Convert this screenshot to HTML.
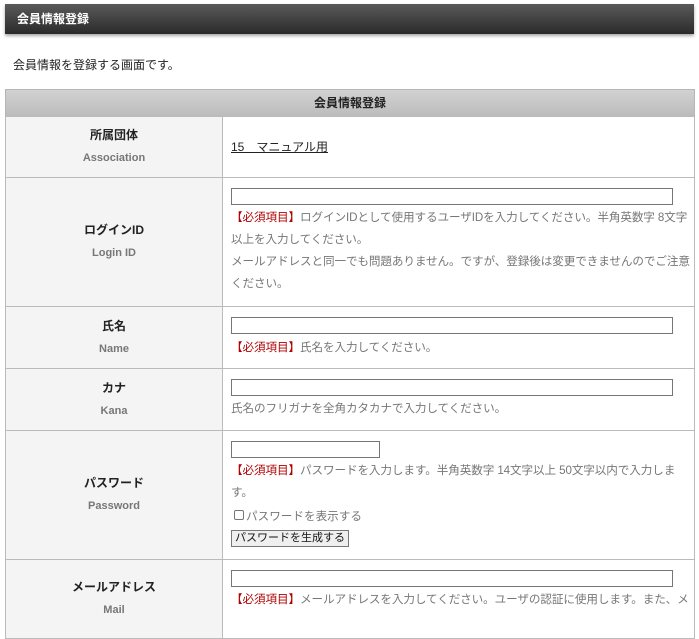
<!DOCTYPE html>
<html><head><meta charset="utf-8"><style>
*{margin:0;padding:0;box-sizing:border-box}
body{width:699px;height:601px;overflow:hidden;background:#fff;font-family:"Liberation Sans","Noto Sans CJK JP",sans-serif;font-size:12px;color:#222;position:relative}
.a{position:absolute;white-space:nowrap}
.hd{position:absolute;left:5px;top:4px;width:689px;height:30px;background:linear-gradient(#5a5a5a,#2a2a2a);box-shadow:0 2px 3px rgba(0,0,0,.35);color:#fff;font-weight:bold;font-size:12px;line-height:30px;padding-left:12px}
.th{position:absolute;left:5px;top:89px;width:690px;height:28px;background:linear-gradient(#d2d2d2,#bcbcbc);border:1px solid #b5b5b5;text-align:center;font-weight:bold;line-height:26px}
.lc{position:absolute;left:5px;width:218px;background:#f4f4f4;border:1px solid #bbb;text-align:center;display:flex;flex-direction:column;justify-content:center}
.rc{position:absolute;left:222px;width:473px;border:1px solid #bbb}
.lc b{display:block;font-size:12px;line-height:23px}
.lc i{display:block;font-style:normal;font-weight:bold;color:#777;font-size:11px;line-height:23px}
.in{position:absolute;left:231px;height:17px;border:1px solid #767676;background:#fff}
.t{position:absolute;left:231px;color:#777;line-height:22px;white-space:nowrap;font-size:11.6px;letter-spacing:-0.1px}
.r{color:#b00000}
</style></head><body>
<div class="hd">会員情報登録</div>
<div class="a" style="left:13px;top:56px">会員情報を登録する画面です。</div>
<div class="th">会員情報登録</div>

<div class="lc" style="top:116px;height:62px"><b>所属団体</b><i>Association</i></div>
<div class="rc" style="top:116px;height:62px"></div>
<div class="a" style="left:231px;top:138px;text-decoration:underline">15　マニュアル用</div>

<div class="lc" style="top:177px;height:130px"><b>ログインID</b><i>Login ID</i></div>
<div class="rc" style="top:177px;height:130px"></div>
<div class="in" style="top:188px;width:442px"></div>
<div class="t" style="top:207px"><span class="r">【必須項目】</span>ログインIDとして使用するユーザIDを入力してください。半角英数字 8文字<br>以上を入力してください。<br>メールアドレスと同一でも問題ありません。ですが、登録後は変更できませんのでご注意<br>ください。</div>

<div class="lc" style="top:306px;height:63px"><b>氏名</b><i>Name</i></div>
<div class="rc" style="top:306px;height:63px"></div>
<div class="in" style="top:317px;width:442px"></div>
<div class="t" style="top:337px"><span class="r">【必須項目】</span>氏名を入力してください。</div>

<div class="lc" style="top:368px;height:63px"><b>カナ</b><i>Kana</i></div>
<div class="rc" style="top:368px;height:63px"></div>
<div class="in" style="top:379px;width:442px"></div>
<div class="t" style="top:398px">氏名のフリガナを全角カタカナで入力してください。</div>

<div class="lc" style="top:430px;height:130px"><b>パスワード</b><i>Password</i></div>
<div class="rc" style="top:430px;height:130px"></div>
<div class="in" style="top:441px;width:149px"></div>
<div class="t" style="top:460px"><span class="r">【必須項目】</span>パスワードを入力します。半角英数字 14文字以上 50文字以内で入力しま<br>す。</div>
<div class="a" style="left:234px;top:510px;width:10px;height:10px;border:1px solid #777;border-radius:2px"></div>
<div class="a" style="left:246px;top:508px;color:#777;font-size:11.6px">パスワードを表示する</div>
<div class="a" style="left:231px;top:530px;width:118px;height:17px;border:1px solid #777;background:#efefef;text-align:center;line-height:15px;color:#111;font-size:11px">パスワードを生成する</div>

<div class="lc" style="top:559px;height:80px"><b>メールアドレス</b><i>Mail</i></div>
<div class="rc" style="top:559px;height:80px"></div>
<div class="in" style="top:570px;width:442px"></div>
<div class="t" style="top:589px"><span class="r">【必須項目】</span>メールアドレスを入力してください。ユーザの認証に使用します。また、メ</div>
</body></html>
